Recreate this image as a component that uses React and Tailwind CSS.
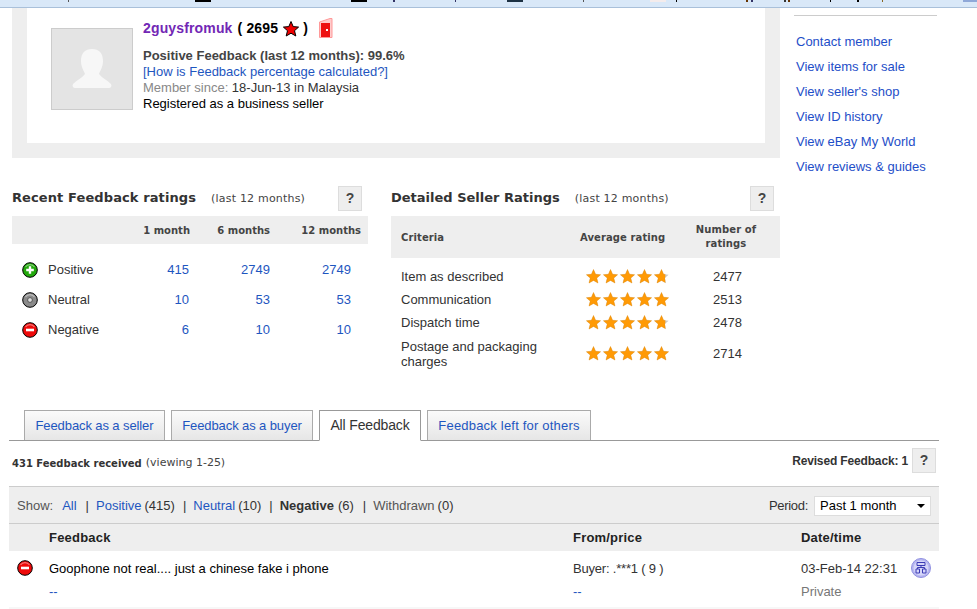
const font = { fontFamily: '"Liberation Sans", Arial, sans-serif' };
const Verdana = { fontFamily: '"DejaVu Sans", Verdana, sans-serif' };

function Help({ cls = "" }) {
  return (
    <div className={"w-6 h-[25px] bg-[#eeeeee] border border-[#dddddd] flex items-center justify-center text-[14px] font-bold text-[#444444] " + cls}>?</div>
  );
}

function Dot({ kind }) {
  const fill = { pos: "#22a80c", neu: "#8a8a8a", neg: "#ee0a0a" }[kind];
  return (
    <svg width="16" height="16" viewBox="0 0 16 16" className="shrink-0">
      <circle cx="8" cy="8" r="7.3" fill={fill} stroke="#000" strokeWidth="1" />
      <path d="M3.5 5 A5.5 5.5 0 0 1 12.5 5" fill="none" stroke="#fff" strokeOpacity="0.45" strokeWidth="1.2" />
      {kind === "pos" && <path d="M8 4.2v7.6M4.2 8h7.6" stroke="#fff" strokeWidth="2.4" />}
      {kind === "neg" && <path d="M4 8h8" stroke="#fff" strokeWidth="2.6" />}
      {kind === "neu" && <circle cx="8" cy="8" r="2.4" fill="#ddd" stroke="#555" strokeWidth="1" />}
    </svg>
  );
}

function Star({ part }) {
  const d = "M8 0.5 L10.2 5.6 L15.6 6.1 L11.5 9.7 L12.8 15 L8 12.2 L3.2 15 L4.5 9.7 L0.4 6.1 L5.8 5.6 Z";
  return (
    <svg width="15" height="15" viewBox="0 0 16 16" className="shrink-0">
      <path d={d} fill="#c9c9c9" />
      <path d={d} fill="#ff9a05" stroke="#e88a00" strokeWidth="0.4" style={part ? { clipPath: "inset(0 25% 0 0)" } : undefined} />
    </svg>
  );
}

function Stars({ part }) {
  return (
    <div className="flex w-[85px] gap-[2px]">
      <Star /><Star /><Star /><Star /><Star part={part} />
    </div>
  );
}

function Tab({ children, active, w, track = "tracking-[0.2px]" }) {
  return active ? (
    <div className={"h-[31px] -mb-px bg-white border border-[#999999] border-b-white flex items-center justify-center text-[14px] tracking-[-0.15px] text-[#333333] " + w}>{children}</div>
  ) : (
    <div className={"h-[30px] bg-gradient-to-b from-[#fbfbfb] to-[#e6e6e6] border border-b-0 border-[#aaaaaa] flex items-center justify-center text-[13px] text-[#1e56c0] " + track + " " + w}>{children}</div>
  );
}

function RatingRow({ kind, label, a, b, c }) {
  return (
    <div className="h-[30px] flex items-center text-[13px]">
      <div className="w-[10px]" />
      <Dot kind={kind} />
      <div className="w-[94px] pl-[10px] text-[#333333]">{label}</div>
      <div className="w-[57px] text-right text-[#1e56c0]">{a}</div>
      <div className="w-[81px] text-right text-[#1e56c0]">{b}</div>
      <div className="w-[81px] text-right text-[#1e56c0]">{c}</div>
    </div>
  );
}

function SellerRow({ label, part, n, tall }) {
  return (
    <div className={"flex items-center text-[13px] text-[#333333] " + (tall ? "h-[39px]" : "h-[23px]")}>
      <div className="w-[195px] pl-[10px] leading-[15px]">{label}</div>
      <Stars part={part} />
      <div className="w-[71px] text-right">{n}</div>
    </div>
  );
}

export default function App() {
  return (
    <div className="w-[977px] h-[609px] overflow-hidden bg-white relative" style={font}>
      <div className="h-2 bg-[#d9e8f8] border-b border-[#a9c0da] relative">
        <div className="absolute top-0 left-[195px] w-4 h-[2px] bg-black" />
        <div className="absolute top-0 left-[351px] w-4 h-[2px] bg-black" />
        <div className="absolute top-0 left-[507px] w-4 h-[2px] bg-[#1d3244]" />
        <div className="absolute top-0 left-[650px] w-4 h-[2px] bg-[#f4ecec]" />
        <div className="absolute top-0 left-[68px] w-px h-[2px] bg-[#555555]" />
        <div className="absolute top-0 left-[393px] w-[2px] h-[2px] bg-[#333366]" />
        <div className="absolute top-0 left-[455px] w-px h-[2px] bg-[#333366]" />
        <div className="absolute top-0 left-[583px] w-px h-[2px] bg-[#555555]" />
        <div className="absolute top-0 left-[676px] w-px h-[2px] bg-black" />
        <div className="absolute top-0 left-[746px] w-[2px] h-[2px] bg-[#663300]" />
        <div className="absolute top-0 left-[751px] w-[2px] h-[2px] bg-[#333366]" />
        <div className="absolute top-0 left-[784px] w-[2px] h-[2px] bg-[#333333]" />
        <div className="absolute top-0 left-[788px] w-[2px] h-[2px] bg-[#663300]" />
        <div className="absolute top-0 left-[830px] w-px h-[2px] bg-black" />
        <div className="absolute top-0 left-[857px] w-[2px] h-[2px] bg-black" />
        <div className="absolute top-0 left-[882px] w-px h-[2px] bg-[#886622]" />
        <div className="absolute top-0 left-[963px] w-[14px] h-[2px] bg-[#8fa8d8]" />
      </div>
      <div className="flex h-[150px]">
        <div className="w-[768px] ml-3 bg-[#eeeeee] h-[150px] px-[15px] pb-[15px]">
          <div className="bg-white h-full flex pl-6 pt-[9px]">
            <div className="w-[82px] h-[82px] mt-[11px] bg-[#e4e4e4] border border-[#cccccc] flex items-center justify-center shrink-0">
              <svg width="40" height="42" viewBox="0 0 40 42">
                <path d="M20 1c7 0 11 4 11 12 0 6-3 10-4 13 3 4 8 6 12 10 1 2 0 4-2 4H3c-2 0-3-2-2-4 4-4 9-6 12-10-1-3-4-7-4-13 0-8 4-12 11-12z" fill="#f7f7f7" />
              </svg>
            </div>
            <div className="ml-[10px]">
              <div className="flex items-center h-[22px] text-[14px] tracking-[0.15px] font-bold text-black">
                <span className="text-[#7227b5]">2guysfromuk</span>
                <span className="ml-[5px]">( 2695</span>
                <svg width="16" height="16" viewBox="0 0 16 16" className="ml-[5px] mt-[2px]">
                  <path d="M8 0.5 L10.2 5.6 L15.6 6.1 L11.5 9.7 L12.8 15 L8 12.2 L3.2 15 L4.5 9.7 L0.4 6.1 L5.8 5.6 Z" fill="#f00000" stroke="#000" strokeWidth="1" />
                </svg>
                <span className="ml-[4px]">)</span>
                <svg width="14" height="20" viewBox="0 0 14 20" className="ml-[11px]">
                  <path d="M0.5 4 L11 0.5 L13 0.5 L13 19.5 L0.5 19.5 Z" fill="#fcc" stroke="#f99" />
                  <rect x="2" y="5" width="9" height="14" fill="#ee1111" />
                  <rect x="7" y="11" width="2" height="2" fill="#fff" />
                </svg>
              </div>
              <div className="mt-[9px] text-[13px] leading-4 font-bold text-[#444444]">Positive Feedback (last 12 months): 99.6%</div>
              <div className="text-[13px] leading-4 text-[#1e56c0]">[How is Feedback percentage calculated?]</div>
              <div className="text-[13px] leading-4 text-[#333333]"><span className="text-[#888888]">Member since:</span> 18-Jun-13 in Malaysia</div>
              <div className="text-[13px] leading-4 text-black">Registered as a business seller</div>
            </div>
          </div>
        </div>
        <div className="ml-[14px] w-[143px]">
          <div className="h-px bg-[#cccccc] mt-[7px]" />
          <div className="mt-[13px] pl-[2px] flex flex-col text-[13px] leading-[25px] text-[#1e4ec8]">
            <div>Contact member</div>
            <div>View items for sale</div>
            <div>View seller's shop</div>
            <div>View ID history</div>
            <div>View eBay My World</div>
            <div>View reviews &amp; guides</div>
          </div>
        </div>
      </div>

      <div className="flex ml-3 mt-[28px]">
        <div className="w-[356px]">
          <div className="flex items-center h-[25px]">
            <span className="-mt-px text-[13px] tracking-[0.1px] font-bold text-[#333333]" style={Verdana}>Recent Feedback ratings</span>
            <span className="mt-px ml-[15px] text-[11px] tracking-[0.2px] text-[#444444]" style={Verdana}>(last 12 months)</span>
            <Help cls="ml-auto mr-[6px]" />
          </div>
          <div className="mt-[5px] h-7 bg-[#eeeeee] flex items-center text-[10px] font-bold text-[#444444]" style={Verdana}>
            <div className="w-[178px] text-right">1 month</div>
            <div className="w-[80px] text-right">6 months</div>
            <div className="w-[91px] text-right">12 months</div>
          </div>
          <div className="mt-[11px]">
            <RatingRow kind="pos" label="Positive" a="415" b="2749" c="2749" />
            <RatingRow kind="neu" label="Neutral" a="10" b="53" c="53" />
            <RatingRow kind="neg" label="Negative" a="6" b="10" c="10" />
          </div>
        </div>
        <div className="w-[389px] ml-[23px]">
          <div className="flex items-center h-[25px]">
            <span className="-mt-px text-[13px] font-bold text-[#333333]" style={Verdana}>Detailed Seller Ratings</span>
            <span className="mt-px ml-[15px] text-[11px] tracking-[0.2px] text-[#444444]" style={Verdana}>(last 12 months)</span>
            <Help cls="ml-auto mr-[6px]" />
          </div>
          <div className="mt-[5px] h-[42px] bg-[#eeeeee] flex items-center text-[10px] tracking-[0.1px] font-bold text-[#444444]" style={Verdana}>
            <div className="w-[189px] pl-[10px]">Criteria</div>
            <div className="w-[86px] whitespace-nowrap">Average rating</div>
            <div className="w-[100px] ml-[10px] text-center leading-[14px]">Number of<br />ratings</div>
          </div>
          <div className="mt-[7px]">
            <SellerRow label="Item as described" part n="2477" />
            <SellerRow label="Communication" n="2513" />
            <SellerRow label="Dispatch time" part n="2478" />
            <SellerRow label={<>Postage and packaging<br />charges</>} n="2714" tall />
          </div>
        </div>
      </div>

      <div className="absolute left-[9px] top-[410px] w-[930px]">
        <div className="flex items-end gap-[6px] pl-[15px] h-[31px] border-b border-[#999999]">
          <Tab w="w-[141px]" track="tracking-[-0.1px]">Feedback as a seller</Tab>
          <Tab w="w-[142px]" track="tracking-[-0.1px]">Feedback as a buyer</Tab>
          <Tab active w="w-[102px]">All Feedback</Tab>
          <Tab w="w-[164px]">Feedback left for others</Tab>
        </div>
        <div className="h-[45px] flex items-center pl-[3px] pr-[3px]">
          <span className="text-[10px] font-bold text-[#333333]" style={Verdana}>431 Feedback received</span>
          <span className="ml-1 text-[11px] text-[#444444]" style={Verdana}>(viewing 1-25)</span>
          <span className="ml-auto -mt-[6px] text-[12px] tracking-[-0.15px] font-bold text-[#333333]">Revised Feedback: 1</span>
          <Help cls="ml-[4px] -mt-[6px]" />
        </div>
        <div className="h-[38px] bg-[#eeeeee] border-t border-b border-[#cccccc] flex items-center pl-2 pt-px text-[13px] text-[#333333]">
          <span className="text-[#555555]">Show:</span>
          <span className="ml-[9px] text-[#1e56c0]">All</span>
          <span className="ml-[9px]">|</span>
          <span className="ml-[7px] text-[#1e56c0]">Positive</span>
          <span className="ml-[3px]">(415)</span>
          <span className="ml-2">|</span>
          <span className="ml-[7px] text-[#1e56c0]">Neutral</span>
          <span className="ml-[3px]">(10)</span>
          <span className="ml-2">|</span>
          <span className="ml-[7px] font-bold">Negative</span>
          <span className="ml-1">(6)</span>
          <span className="ml-[9px]">|</span>
          <span className="ml-[7px] text-[#555555]">Withdrawn</span>
          <span className="ml-[3px]">(0)</span>
          <span className="ml-auto tracking-[-0.3px]">Period:</span>
          <div className="ml-[6px] mr-[8px] w-[117px] h-[20px] bg-white border border-[#dddddd] flex items-center pl-[5px] text-black relative">
            Past 1 month
            <div className="absolute right-[5px] top-[7px] w-0 h-0 border-l-[4px] border-r-[4px] border-t-[4px] border-l-transparent border-r-transparent border-t-black" />
          </div>
        </div>
        <div className="h-[27px] bg-[#eeeeee] flex items-center pt-px text-[13px] tracking-[0.2px] font-bold text-[#222222]">
          <div className="w-[564px] pl-10">Feedback</div>
          <div className="w-[228px]">From/price</div>
          <div>Date/time</div>
        </div>
        <div className="h-[59px] border-b-[3px] border-[#f7f7f7] flex text-[13px] text-[#333333]">
          <div className="w-10 pl-2 pt-[9px] shrink-0"><Dot kind="neg" /></div>
          <div className="w-[524px] pt-[10px] leading-4">
            <div className="text-black">Goophone not real.... just a chinese fake i phone</div>
            <div className="mt-[7px] text-[#1e56c0]">--</div>
          </div>
          <div className="w-[228px] pt-[10px] leading-4">
            <div className="tracking-[-0.2px]">Buyer: .***1 ( 9 )</div>
            <div className="mt-[7px] text-[#1e56c0]">--</div>
          </div>
          <div className="w-[110px] pt-[10px] leading-4">
            <div>03-Feb-14 22:31</div>
            <div className="mt-[7px] text-[#777777]">Private</div>
          </div>
          <div className="pt-[7px]">
            <svg width="20" height="20" viewBox="0 0 20 20">
              <circle cx="10" cy="10" r="9.5" fill="#b7b7f0" stroke="#8f8fe0" />
              <circle cx="10" cy="10" r="7.5" fill="#d5d5f8" />
              <path d="M6 4.5h8v3H6zM10 7.5v2M6.5 9.5h7M6.5 9.5v1.5M13.5 9.5v1.5M5 11h3.5v4H5zM11.5 11H15v4h-3.5z" fill="none" stroke="#3b3bb5" strokeWidth="1" />
            </svg>
          </div>
        </div>
      </div>
    </div>
  );
}
